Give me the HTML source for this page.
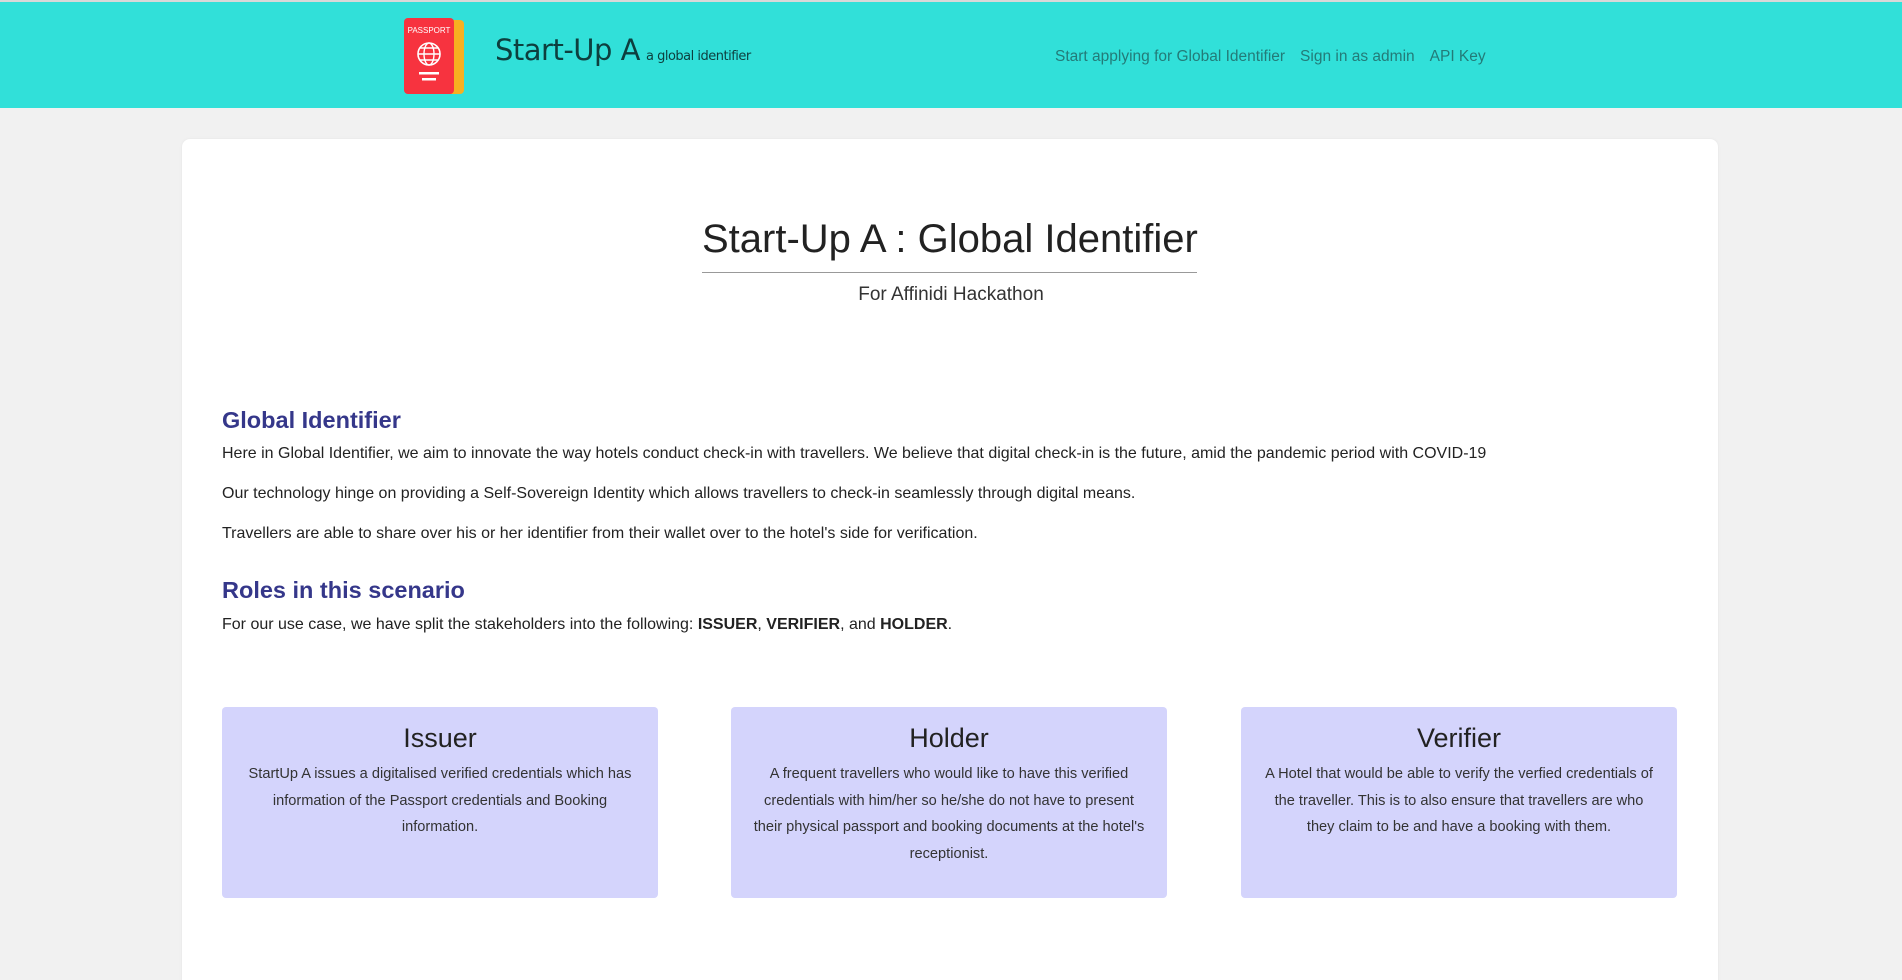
<!DOCTYPE html>
<html><head><meta charset="utf-8"><style>
*{margin:0;padding:0;box-sizing:border-box}
html,body{width:1902px;height:980px;overflow:hidden}
body{background:#f1f1f1;font-family:"Liberation Sans",Arial,sans-serif;color:#222;position:relative}
.hdr{position:absolute;left:0;top:0;width:1902px;height:108px;background:#31e0d9;border-top:2px solid #d8d8d8}
.brand{position:absolute;left:495px;top:31px;font-family:"DejaVu Sans","Liberation Sans",sans-serif;font-size:29px;color:#0d3f3e;letter-spacing:-0.5px}
.brand small{font-size:13px;margin-left:6px}
.nav{position:absolute;left:1055px;top:46px;font-size:15.5px;color:#237b78}
.nav span{margin-right:15px}
.card{position:absolute;left:182px;top:139px;width:1536px;height:860px;background:#fff;border-radius:8px;box-shadow:0 0 3px rgba(0,0,0,.05)}
.title{position:absolute;left:702px;top:217px;width:495px;text-align:center;font-size:40px;color:#222;border-bottom:1px solid #999;height:56px;white-space:nowrap}
.sub{position:absolute;left:0;width:1902px;top:284px;text-align:center;font-size:19px;color:#333}
h2{position:absolute;left:222px;font-size:23.5px;color:#35378a;font-weight:bold}
p.t{position:absolute;left:222px;font-size:16px;color:#222}
.box{position:absolute;top:707px;width:436px;height:191px;background:#d4d4fc;border-radius:4px;text-align:center}
.box h3{font-weight:normal;font-size:27px;margin-top:16px;color:#222}
.box p{font-size:14.6px;line-height:26.5px;color:#333;padding:0 18px;margin-top:7px}
</style></head><body>
<div class="hdr">
<svg style="position:absolute;left:402px;top:14px" width="66" height="82" viewBox="0 0 66 82">
<rect x="12" y="4" width="50" height="74" rx="4" fill="#f7b021"/>
<rect x="2" y="2" width="50" height="76" rx="4" fill="#f7333f"/>
<text x="27" y="17" font-size="8" fill="#fff" text-anchor="middle" font-family="Liberation Sans">PASSPORT</text>
<circle cx="27" cy="38" r="11" fill="none" stroke="#fff" stroke-width="1.6"/>
<ellipse cx="27" cy="38" rx="5" ry="11" fill="none" stroke="#fff" stroke-width="1.4"/>
<path d="M16 38h22M18 32h18M18 44h18" stroke="#fff" stroke-width="1.4"/>
<rect x="17" y="56" width="20" height="2.5" fill="#fff"/><rect x="20" y="62" width="14" height="2.5" fill="#fff"/>
</svg>
<div class="brand">Start-Up A<small>a global identifier</small></div>
<div class="nav"><span>Start applying for Global Identifier</span><span>Sign in as admin</span><span>API Key</span></div>
</div>
<div class="card"></div>
<div class="title">Start-Up A : Global Identifier</div>
<div class="sub">For Affinidi Hackathon</div>
<h2 style="top:407px">Global Identifier</h2>
<p class="t" style="top:445px">Here in Global Identifier, we aim to innovate the way hotels conduct check-in with travellers. We believe that digital check-in is the future, amid the pandemic period with COVID-19</p>
<p class="t" style="top:485px">Our technology hinge on providing a Self-Sovereign Identity which allows travellers to check-in seamlessly through digital means.</p>
<p class="t" style="top:525px">Travellers are able to share over his or her identifier from their wallet over to the hotel's side for verification.</p>
<h2 style="top:577px">Roles in this scenario</h2>
<p class="t" style="top:616px">For our use case, we have split the stakeholders into the following: <b>ISSUER</b>, <b>VERIFIER</b>, and <b>HOLDER</b>.</p>
<div class="box" style="left:222px"><h3>Issuer</h3><p>StartUp A issues a digitalised verified credentials which has information of the Passport credentials and Booking information.</p></div>
<div class="box" style="left:731px"><h3>Holder</h3><p>A frequent travellers who would like to have this verified credentials with him/her so he/she do not have to present their physical passport and booking documents at the hotel's receptionist.</p></div>
<div class="box" style="left:1241px"><h3>Verifier</h3><p>A Hotel that would be able to verify the verfied credentials of the traveller. This is to also ensure that travellers are who they claim to be and have a booking with them.</p></div>
</body></html>
